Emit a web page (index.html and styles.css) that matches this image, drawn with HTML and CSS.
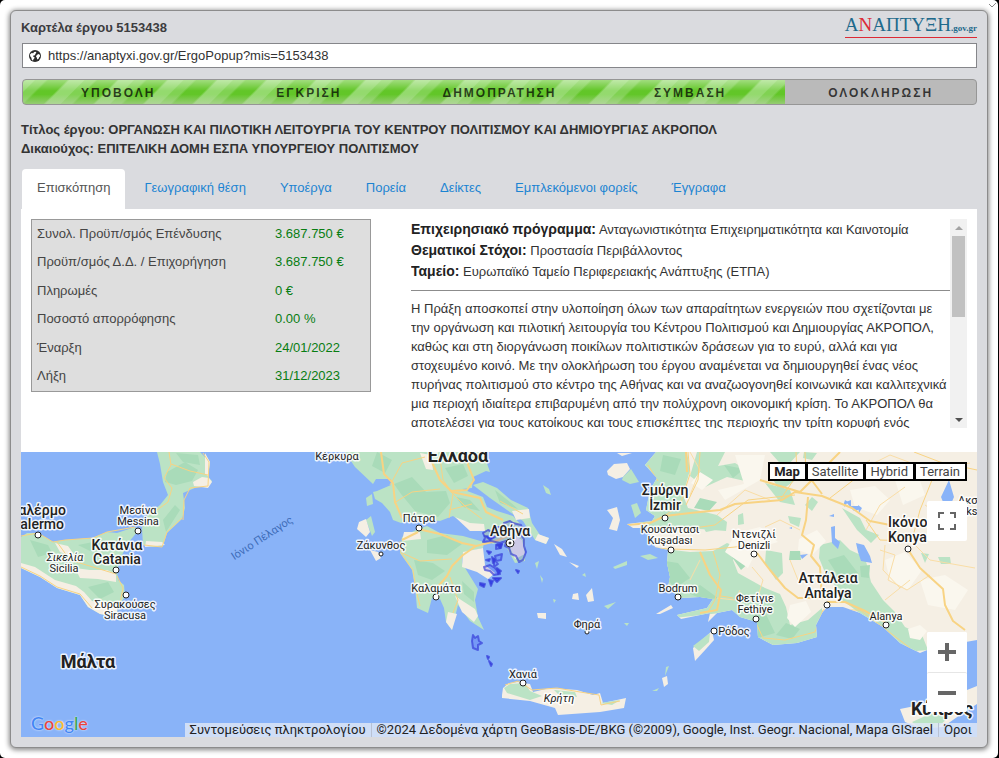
FILE: index.html
```html
<!DOCTYPE html>
<html lang="el">
<head>
<meta charset="utf-8">
<meta name="viewport" content="width=device-width, initial-scale=1">
<title>Καρτέλα έργου 5153438</title>
<link rel="stylesheet" href="styles.css">
</head>
<body>
<svg class="corner-tick" viewBox="0 0 8 6" aria-hidden="true"><path d="M0 2l3 3 4-4" fill="none" stroke="#888"/></svg>
<main class="card">
  <header class="card-head">
    <h1 class="card-title"><label for="url">Καρτέλα έργου 5153438</label></h1>
    <a class="brand" href="#">Α<span class="brand-red">Ν</span>ΑΠΤΥΞΗ<small>.gov.gr</small></a>
  </header>

  <div class="url-box">
    <svg class="globe" viewBox="0 0 12 12" aria-hidden="true">
      <circle cx="6" cy="6" r="6" fill="#2c2c2c"/>
      <path fill="#fff" d="M1 4.6 2.6 3l1.6.3.9-1.2 1.5-.4.8 1-1.1 1.2-.3 1.3-1.5.2-.6 1 1.4.5.2 1.2-1.2 1.4-.3 1.2-1.3-1.2-.3-1.7L1.200 6.300z"/>
      <path fill="#fff" d="M7.600 5.200 9.300 4.100l1.500.6.4 1.600-1 .9-.6 1.600-1.400.7-.3-1.700-.9-1z"/>
    </svg>
    <input id="url" class="url-input" type="text" readonly value="https://anaptyxi.gov.gr/ErgoPopup?mis=5153438">
  </div>

  <ol class="progress">
    <li class="step">ΥΠΟΒΟΛΗ</li>
    <li class="step">ΕΓΚΡΙΣΗ</li>
    <li class="step">ΔΗΜΟΠΡΑΤΗΣΗ</li>
    <li class="step">ΣΥΜΒΑΣΗ</li>
    <li class="step">ΟΛΟΚΛΗΡΩΣΗ</li>
  </ol>

  <div class="project">
    <p>Τίτλος έργου: ΟΡΓΑΝΩΣΗ ΚΑΙ ΠΙΛΟΤΙΚΗ ΛΕΙΤΟΥΡΓΙΑ ΤΟΥ ΚΕΝΤΡΟΥ ΠΟΛΙΤΙΣΜΟΥ ΚΑΙ ΔΗΜΙΟΥΡΓΙΑΣ ΑΚΡΟΠΟΛ</p>
    <p>Δικαιούχος: ΕΠΙΤΕΛΙΚΗ ΔΟΜΗ ΕΣΠΑ ΥΠΟΥΡΓΕΙΟΥ ΠΟΛΙΤΙΣΜΟΥ</p>
  </div>

  <nav class="tabs">
    <a class="tab active" href="#">Επισκόπηση</a>
    <a class="tab" href="#">Γεωγραφική θέση</a>
    <a class="tab" href="#">Υποέργα</a>
    <a class="tab" href="#">Πορεία</a>
    <a class="tab" href="#">Δείκτες</a>
    <a class="tab" href="#">Εμπλεκόμενοι φορείς</a>
    <a class="tab" href="#">Έγγραφα</a>
  </nav>

  <section class="overview">
    <div class="facts-wrap">
      <table class="facts">
        <tr><th scope="row">Συνολ. Προϋπ/σμός Επένδυσης</th><td>3.687.750 €</td></tr>
        <tr><th scope="row">Προϋπ/σμός Δ.Δ. / Επιχορήγηση</th><td>3.687.750 €</td></tr>
        <tr><th scope="row">Πληρωμές</th><td>0 €</td></tr>
        <tr><th scope="row">Ποσοστό απορρόφησης</th><td>0.00 %</td></tr>
        <tr><th scope="row">Έναρξη</th><td>24/01/2022</td></tr>
        <tr><th scope="row">Λήξη</th><td>31/12/2023</td></tr>
      </table>
    </div>
    <div class="details">
      <div class="details-text">
        <p class="meta"><strong>Επιχειρησιακό πρόγραμμα:</strong> Ανταγωνιστικότητα Επιχειρηματικότητα και Καινοτομία</p>
        <p class="meta"><strong>Θεματικοί Στόχοι:</strong> Προστασία Περιβάλλοντος</p>
        <p class="meta"><strong>Ταμείο:</strong> Ευρωπαϊκό Ταμείο Περιφερειακής Ανάπτυξης (ΕΤΠΑ)</p>
        <p class="summary">Η Πράξη αποσκοπεί στην υλοποίηση όλων των απαραίτητων ενεργειών που σχετίζονται με την οργάνωση και πιλοτική λειτουργία του Κέντρου Πολιτισμού και Δημιουργίας ΑΚΡΟΠΟΛ, καθώς και στη διοργάνωση ποικίλων πολιτιστικών δράσεων για το ευρύ, αλλά και για στοχευμένο κοινό. Με την ολοκλήρωση του έργου αναμένεται να δημιουργηθεί ένας νέος πυρήνας πολιτισμού στο κέντρο της Αθήνας και να αναζωογονηθεί κοινωνικά και καλλιτεχνικά μια περιοχή ιδιαίτερα επιβαρυμένη από την πολύχρονη οικονομική κρίση. Το ΑΚΡΟΠΟΛ θα αποτελέσει για τους κατοίκους και τους επισκέπτες της περιοχής την τρίτη κορυφή ενός</p>
      </div>
      <div class="scrollbar" aria-hidden="true">
        <span class="arrow up"></span>
        <span class="thumb"></span>
        <span class="arrow down"></span>
      </div>
    </div>
  </section>

  <section class="map">
    <svg class="map-canvas" viewBox="21 452 956 285" preserveAspectRatio="xMidYMid slice" role="img" aria-label="Χάρτης">
      <defs>
        <clipPath id="turkey"><path d="M656 452 645 465 657 478 650 490 646 510 655 516 652 521 627 524 633 528 647 528 655 547 668 550 667 563 670 577 668 587 680 598 700 597 713 599 707 608 677 615 681 619 710 613 708 622 717 613 732 610 740 617 757 622 758 637 773 645 797 643 817 637 816 625 822 613 827 607 843 607 860 613 883 627 900 643 920 653 932 648 977 640V452z"/></clipPath>
      </defs>
      <rect class="sea" x="21" y="452" width="956" height="285"/>

      <g class="land">
        <path class="green" d="M157 452 160 464 163 482 168 495 160 505 147 515 142 528 143 545 153 547 163 546 167 533 182 519 185 508 183 493 197 487 208 487 212 481 208 477 210 462 200 452z"/>
        <path class="beige" d="M194 486 193 482 202 477 209 478 212 482 208 488zM146 541 162 542 165 545 145 547zM205 453 210 462 208 476 205 474z"/>
        <path class="wood" d="M167 472 185 462 198 470 192 481 176 485 165 482zM163 520 175 505 180 510 166 532zM176 453 198 455 200 465 183 462z"/>
        <path class="green" d="M21 537 27 533 38 533 53 542 65 540 93 538 107 532 117 533 135 527 138 531 128 543 122 555 117 570 118 580 124 585 125 597 118 606 117 617 100 614 88 607 80 595 57 588 40 577 21 568z"/>
        <path class="beige" d="M21 563 35 567 55 580 76 586 84 592 92 601 117 605 117 617 100 614 88 607 80 595 57 588 40 577 21 568zM75 568 90 570 107 570 116 574 116 582 98 579 80 578zM55 543 68 546 78 560 60 552z"/>
        <path class="wood" d="M30 540 48 545 52 553 38 557zM78 545 98 541 105 546 90 551zM88 587 108 582 114 592 100 599z"/>
      </g>
      <g class="road">
        <path d="M169 452 171 465 164 478 172 488 168 502 150 515M183 520 184 500 190 488 208 486 209 462 203 453M171 464 190 471 208 475M21 536 38 533 53 542 65 540 93 538 107 532 135 527M57 542 70 560 116 574M21 567 40 576 57 587 80 594 92 608M117 576 123 588 120 603M144 545 162 547 167 532 182 518"/>
      </g>

      <g class="land">
        <path class="green" d="M345 452 355 467 373 484 376 479 391 479 391 485 377 491 373 492 375 499 382 503 390 512 393 520 401 523 417 519 440 521 453 516 462 522 470 529 484 528 484 538 493 544 503 541 515 563 525 561 525 540 523 527 513 516 497 511 487 507 483 497 462 489 472 488 473 477 486 471 490 472 483 452z"/>
        <path class="green" d="M402 537 418 529 427 526 440 533 463 536 484 542 483 548 463 553 462 563 478 589 475 600 478 617 484 630 470 621 458 605 456 613 452 630 446 622 444 608 440 599 432 598 428 613 417 608 415 587 412 570 400 553z"/>
        <path class="green" d="M473 485 483 482 497 488 511 500 528 508 532 523 540 535 549 538 546 544 535 540 523 521 507 510 490 498z"/>
        <path class="beige" d="M463 552 483 548 485 565 495 573 488 579 477 572 462 567zM404 532 420 532 421 539 402 541zM455 596 475 609 478 616 474 622 462 612zM448 612 457 614 452 630 446 622zM455 517 470 523 484 524 485 531 470 531zM512 511 529 509 530 518 516 520zM512 534 522 540 525 554 515 559 509 545zM538 534 549 538 546 544 535 540zM420 453 431 455 433 470 426 469z"/>
        <path class="wood" d="M394 484 412 477 426 492 446 491 450 503 438 517 415 511 401 494zM377 452 392 460 385 473 372 466zM445 468 463 464 468 476 454 483zM456 497 470 500 480 511 463 507zM427 540 447 535 462 544 447 555 427 553zM414 560 433 563 445 571 432 580 418 575zM462 581 474 592 474 602 464 594zM495 490 510 502 518 509 500 503z"/>
        <path class="green" d="M366 498 372 494 373 504 367 506zM366 520 371 516 375 532 372 536z"/>
        <path class="beige" d="M357 529 359 522 366 519 370 532 366 537zM370 550 378 552 381 558 376 561z"/>
        <path class="beige" d="M502 695 503 688 509 683 518 682 530 684 533 692 550 688 577 690 593 695 600 693 603 703 626 698 624 708 600 712 558 715 555 708 530 701 502 698z"/>
        <path class="green" d="M504 688 510 684 525 683 530 691 542 696 530 700 507 693zM554 690 575 692 577 697 558 694zM600 703 620 700 612 705z"/>
      </g>
      <g class="road thick">
        <path d="M381 452 384 474 393 483 395 502 402 518M418 529 440 534 462 543 476 546 496 541 510 535M476 546 463 555 452 566 447 576 436 589M431 460 440 480 452 492 480 498 486 512 503 520M466 452 468 465 474 480 467 490 451 491M402 540 418 532"/>
      </g>
      <g class="road">
        <path d="M390 485 402 463 425 457M394 503 412 492 440 489M440 458 443 480 453 494 449 518M453 494 466 507 482 519M449 510 472 504M402 553 420 561 452 559M400 541 401 553 413 570 416 590 420 606M450 577 458 600 453 613M505 685 518 681 532 690 557 688 580 692 599 695 601 705 620 701M500 501 523 514"/>
      </g>
      <g class="land">
        <path class="beige" d="M607 471 614 464 627 463 630 469 623 477 616 479 608 475zM607 510 617 507 620 520 617 531 609 529 613 518zM617 453 632 453 622 456zM554 544 562 549 567 557 560 555zM569 562 579 566 577 568zM573 594 578 593 579 600 572 599zM586 595 592 588 594 601 588 602zM537 613 546 613 546 619 538 618zM656 614 671 605 673 608 660 614zM662 678 667 676 668 684 664 687z"/>
        <path class="green" d="M623 477 631 469 639 482 630 484 622 480zM631 505 637 503 641 513 635 518zM640 556 650 554 658 558 648 560zM613 567 627 561 627 565 615 569zM604 606 616 602 608 609zM543 485 549 489 551 495 546 493zM535 563 539 561 537 569zM540 575 543 579 542 583zM666 667 669 666 665 676zM652 691 659 688 657 691zM582 575 585 573 586 577zM624 623 629 623 627 626zM553 599 556 600 554 603z"/>
        <path class="beige" d="M693 648 712 631 714 640 706 649 695 661z"/>
        <path class="green" d="M693 646 710 633 709 642 699 651z"/>
      </g>

      <g clip-path="url(#turkey)">
        <rect class="beige" x="620" y="452" width="360" height="210"/>
        <path class="green" d="M640 452H687L690 470 683 495 688 508 717 515 727 522 726 531 700 529 680 527 640 532V505zM697 452 725 452 718 466 735 463 750 472 745 481 727 477 705 487 690 476zM655 548 690 552 713 551 727 543 739 548 733 560 738 573 765 588 780 594 786 607 790 625 808 620 822 608 822 650 740 650 730 612 655 620zM738 515 743 513 744 524 738 525zM695 515 712 518 721 529 706 532zM766 550 782 553 783 573 776 580 765 563zM820 545 840 540 850 550 865 557 871 582 883 600 895 612 905 627 922 635 928 650 905 652 880 630 858 612 842 600 833 582 826 575 819 558zM765 483 790 490 795 505 780 502zM788 516 801 518 799 527 790 523zM842 508 860 518 866 530 879 535 871 543 857 530zM770 452 800 452 787 466 797 479 780 491 772 478 786 470zM804 452 817 453 812 460 803 458zM921 553 929 554 925 563zM938 557 950 557 951 564 941 564zM812 497 818 502 812 511 805 505z"/>
        <path class="wood" d="M700 498 717 502 709 511 694 508zM658 560 678 563 690 578 675 588 667 579zM686 592 700 585 718 598 704 600zM663 455 681 459 675 475 660 471zM724 465 744 469 733 478zM790 551 800 551 801 560 789 560zM828 560 844 555 858 573 844 585zM860 566 870 565 869 578 861 577zM747 622 765 612 775 633 758 638zM786 623 800 629 792 639 776 635zM732 557 750 562 741 570z"/>
        <path class="light" d="M735 455 765 455 760 480 725 500 718 490 744 484zM850 490 875 486 890 500 877 515 855 507zM736 533 760 527 778 542 758 548 748 568 725 552zM790 605 806 601 811 612 795 627 787 618zM895 480 918 475 925 495 903 505zM885 560 905 552 922 570 908 590 890 580zM700 472 713 480 702 490 691 483zM920 580 945 575 968 590 955 610 928 605zM908 629 920 625 927 631 920 640 910 638zM799 539 817 530 826 541 812 555 798 550z"/>
        <path class="sea" d="M941 497 949 480 954 497 951 504 943 502zM844 503 845 500 848 502 844 507zM846 502 851 500 851 506 858 506 861 509 854 511zM831 527 835 526 835 538 840 542 838 549 832 543zM856 543 864 545 870 556 872 563 861 561 858 552zM800 555 808 554 802 559zM858 505 862 508 859 513zM829 516 834 514 834 517zM789 528 792 527 792 529z"/>
        <g class="road faint">
          <path d="M690 452 700 470 690 495M717 515 745 490 770 500M765 527 780 520 800 530M860 470 890 455 930 470 970 463M866 530 880 505 905 487M880 550 895 555 888 580 907 590 930 575M913 543 930 560 975 568M885 600 910 580M752 567 763 580 757 600M820 480 850 475 870 460M700 560 690 580M717 598 735 600 740 590M925 505 940 515 945 530M790 560 798 580M885 545 883 570 900 588"/>
        </g>
        <g class="road">
          <path d="M648 465 658 481M688 452 690 474 680 505 663 517M700 452 698 480 686 505M796 452 797 475 780 500M805 452 806 472M797 465 830 475 860 465M680 530 715 525 748 500 795 495M860 475 830 498M914 452 940 462 977 470M866 520 880 540 910 541M932 480 920 510 912 540M655 548 670 549 705 550 735 547 750 545M713 551 720 575 715 600 708 612M733 598 721 596M757 625 763 638 785 640 815 632 823 610 860 610 880 625 910 648"/>
        </g>
        <g class="road thick">
          <path d="M627 525 650 523 665 516 690 513 720 510 735 504 782 500 795 492 822 496 852 508 870 521 890 525M700 552 710 575 721 590 717 610 700 613M757 553 770 570 785 588 798 598 823 598M760 480 800 492 840 452M808 497 806 520 802 535 814 545 811 556 820 567 822 598M827 602 845 602 865 611 885 622M907 548 920 568 943 589 945 605 953 621 965 630M686 452 687 472M810 478 822 494"/>
        </g>
      </g>
      <g class="land">
        <path class="beige" d="M900 709 910 707 925 703 967 690 977 686V704L960 715 943 727 920 728 905 722z"/>
        <path class="green" d="M912 722 930 714 950 716 938 727 920 728z"/>
      </g>

      <g class="region">
        <path d="M483 533 488 530 492 532 497 527 503 527 504 523 510 521 513 523 521 525 523 530 520 534 524 539 524 546 526 552 523 560 519 562 516 556 511 554 509 548 505 546 506 541 500 543 491 541 483 542 485 538zM496 545 502 543 501 548 496 549zM495 556 502 554 501 560 496 561zM484 567 490 565 495 568 500 574 494 575 490 571 485 570zM494 559 498 564 494 567zM473 635 475 638 478 636 479 641 482 643 478 645 478 650 473 648 472 641z"/>
        <path class="solid" d="M497 545 502 544 500 548zM487 551 491 552 489 554zM492 557 495 560 493 563zM497 568 501 571 498 574zM493 578 501 578 497 582zM480 583 485 584 484 587 480 585zM489 580 493 581 491 586zM516 570 519 571 518 573zM487 656 489 657 488 659zM489 661 492 664 491 666zM485 536 495 537 490 540zM486 560 490 559 489 561z"/>
      </g>

      <g class="pins">
        <circle cx="38" cy="535" r="3"/><circle cx="138" cy="531" r="3"/><circle cx="116" cy="570" r="3"/><circle cx="126" cy="595" r="3"/>
        <circle cx="419" cy="528" r="3"/><circle cx="381" cy="554" r="2"/><circle cx="436" cy="597" r="3"/><circle cx="523" cy="683" r="3"/><circle cx="587" cy="632" r="2"/>
        <circle cx="665" cy="518" r="3"/><circle cx="671" cy="550" r="3"/><circle cx="754" cy="554" r="3"/><circle cx="678" cy="597" r="3"/><circle cx="756" cy="619" r="3"/><circle cx="714" cy="631" r="3"/>
        <circle cx="827" cy="605" r="3"/><circle cx="886" cy="625" r="3"/><circle cx="908" cy="549" r="3"/>
        <circle cx="510" cy="543" r="4"/><circle class="dot" cx="510" cy="543" r="1"/>
      </g>

      <g class="labels">
        <g class="small">
          <text x="138" y="514">Μεσίνα</text><text x="138" y="525">Messina</text>
          <text x="65" y="561" class="italic">Σικελία</text><text x="64" y="572">Sicilia</text>
          <text x="125" y="608">Συρακούσες</text><text x="125" y="619">Siracusa</text>
          <text x="337" y="460">Κέρκυρα</text>
          <text x="419" y="522">Πάτρα</text><text x="381" y="549">Ζάκυνθος</text><text x="436" y="592">Καλαμάτα</text>
          <text x="587" y="628">Φηρά</text><text x="523" y="678">Χανιά</text><text x="559" y="702" class="italic">Κρήτη</text>
          <text x="670" y="533">Κουσάντασι</text><text x="670" y="544">Kuşadası</text>
          <text x="754" y="538">Ντενιζλί</text><text x="754" y="549">Denizli</text>
          <text x="678" y="592">Bodrum</text>
          <text x="755" y="602">Φετίγιε</text><text x="755" y="613">Fethiye</text>
          <text x="734" y="635">Ρόδος</text><text x="886" y="620">Alanya</text>
          <text x="958" y="504" class="start">Ακσαράι</text><text x="959" y="515" class="start">Aksaray</text>
        </g>
        <g class="city">
          <text x="66" y="515" class="end">Παλέρμο</text><text x="64" y="529" class="end">Palermo</text>
          <text x="117" y="550">Κατάνια</text><text x="117" y="564">Catania</text>
          <text x="510" y="536">Αθήνα</text>
          <text x="665" y="495">Σμύρνη</text><text x="665" y="510">İzmir</text>
          <text x="828" y="583">Αττάλεια</text><text x="828" y="598">Antalya</text>
          <text x="888" y="527" class="start">Ικόνιο</text><text x="888" y="542" class="start">Konya</text>
        </g>
        <g class="country">
          <text x="88" y="668">Μάλτα</text><text x="458" y="462">Ελλάδα</text><text x="942" y="715">Κύπρος</text>
        </g>
        <text class="water" transform="translate(264 541) rotate(-33)">Ιόνιο Πέλαγος</text>
      </g>
    </svg>

    <div class="map-types">
      <button class="map-type selected" type="button">Map</button>
      <button class="map-type" type="button">Satellite</button>
      <button class="map-type" type="button">Hybrid</button>
      <button class="map-type" type="button">Terrain</button>
    </div>

    <button class="map-button fullscreen" type="button" aria-label="Πλήρης οθόνη">
      <svg viewBox="0 0 18 18" width="18" height="18"><path d="M1 6V1h5M12 1h5v5M17 12v5h-5M6 17H1v-5" fill="none" stroke="#666" stroke-width="2"/></svg>
    </button>

    <div class="zoom">
      <button class="map-button" type="button" aria-label="Μεγέθυνση">
        <svg viewBox="0 0 18 18" width="18" height="18"><path d="M9 0v18M0 9h18" stroke="#666" stroke-width="4"/></svg>
      </button>
      <button class="map-button" type="button" aria-label="Σμίκρυνση">
        <svg viewBox="0 0 18 18" width="18" height="18"><path d="M0 9h18" stroke="#666" stroke-width="4"/></svg>
      </button>
    </div>

    <a class="google" href="#" aria-label="Google"><span class="b">G</span><span class="r">o</span><span class="y">o</span><span class="b">g</span><span class="g">l</span><span class="r">e</span></a>

    <div class="credits">
      <button class="credit" type="button">Συντομεύσεις πληκτρολογίου</button>
      <span class="credit">©2024 Δεδομένα χάρτη GeoBasis-DE/BKG (©2009), Google, Inst. Geogr. Nacional, Mapa GISrael</span>
      <a class="credit" href="#">Όροι</a>
    </div>
  </section>
</main>
</body>
</html>
```
FILE: styles.css
```css
* {
  box-sizing: border-box;
}

html {
  background: #000;
}

body {
  position: relative;
  margin: 0 1px 0 0;
  min-height: 100vh;
  padding: 10px;
  border-radius: 5px;
  background: #fff;
  color: #333;
  font: 13px/19px "Liberation Sans", Arial, sans-serif;
}

p,
h1,
ol {
  margin: 0;
  padding: 0;
}

a {
  text-decoration: none;
}

button {
  margin: 0;
  font: inherit;
  cursor: pointer;
}

.corner-tick {
  position: absolute;
  top: 2px;
  right: 1px;
  width: 8px;
  height: 6px;
}

.card {
  padding: 0 10px 10px;
  border: 1px solid #8c8c8c;
  border-radius: 6px;
  background: #dadbdf;
  box-shadow: 0 1px 5px 1px #888;
}

.card-head {
  display: flex;
  align-items: center;
  justify-content: space-between;
  height: 32px;
}

.card-title {
  color: #3c3c40;
  font-size: 13px;
}

.brand {
  border-bottom: 1px solid #dc2a35;
  color: #1f6a8c;
  font: 19px/18px "Liberation Serif", "Times New Roman", serif;
}

.brand small {
  font-size: 9px;
  font-weight: bold;
}

.brand-red {
  color: #dc2a35;
}

.url-box {
  display: flex;
  align-items: center;
  gap: 7px;
  height: 25px;
  margin: 0 0 0 1px;
  padding: 0 6px;
  border: 1px solid #85868a;
  background: #fff;
}

.globe {
  width: 12px;
  height: 12px;
}

.url-input {
  flex: 1;
  padding: 0;
  border: 0;
  outline: 0;
  background: none;
  color: #333;
  font: inherit;
}

.progress {
  display: flex;
  height: 26px;
  margin: 11px 0 0 1px;
  overflow: hidden;
  border: 1px solid #969696;
  border-radius: 4px;
  background:
    linear-gradient(to bottom, rgba(255, 255, 255, 0.4) 0, rgba(255, 255, 255, 0) 45%, rgba(255, 255, 255, 0) 60%, rgba(200, 210, 190, 0.5) 100%) left / 80% 100% no-repeat,
    repeating-linear-gradient(135deg, #94da6e 0 8px, #80d252 9px 16px, #62c628 18px 31px, #94da6e 33px 35px) left / 80% 100% no-repeat,
    #bababa;
  list-style: none;
}

.step {
  flex: 1;
  color: rgba(0, 0, 0, 0.72);
  font-size: 12px;
  font-weight: bold;
  line-height: 26px;
  letter-spacing: 2px;
  text-align: center;
}

.project {
  padding: 15px 0 11px;
  color: #333;
  font-weight: bold;
}

.tabs {
  display: flex;
  gap: 4px;
  padding-left: 1px;
}

.tab {
  padding: 9px 15px 12px;
  border-radius: 4px 4px 0 0;
  color: #1c84d2;
}

.tab.active {
  background: #fff;
  color: #555;
}

.overview {
  display: flex;
  gap: 40px;
  padding: 10px 10px 24px;
  background: #fff;
}

.facts-wrap {
  flex: 0 0 340px;
}

.facts {
  width: 100%;
  height: 173px;
  border: 1px solid #999;
  border-spacing: 0;
  background: #dedede;
}

.facts th,
.facts td {
  padding: 0 5px 2px;
  color: #444;
  font-weight: normal;
  text-align: left;
}

.facts td {
  width: 100px;
  color: #087d12;
}

.details {
  display: flex;
  flex: 1;
  height: 209px;
}

.details-text {
  flex: 1;
  overflow: hidden;
}

.meta {
  line-height: 21px;
}

.meta strong {
  color: #222;
  font-size: 14px;
}

.summary {
  margin-top: 8px;
  padding-top: 8px;
  border-top: 1px solid #8c8c8c;
}

.scrollbar {
  display: flex;
  flex-direction: column;
  align-items: center;
  width: 17px;
  background: #f1f1f1;
}

.thumb {
  width: 13px;
  height: 81px;
  margin: 6px 0 auto;
  background: #c1c1c1;
}

.arrow {
  border: 4px solid transparent;
}

.up {
  margin-top: 3px;
  border-bottom-color: #a3a3a3;
}

.down {
  margin-bottom: 2px;
  border-top-color: #505050;
}

.map {
  position: relative;
  height: 285px;
  overflow: hidden;
  font-family: Roboto, sans-serif;
}

.map-canvas {
  display: block;
  width: 100%;
  height: 100%;
}

.sea {
  fill: #89b3f8;
}

.green {
  fill: #bbe3c5;
}

.beige {
  fill: #f5efe4;
}

.wood {
  fill: #a9dbb9;
}

.light {
  fill: #faf7ee;
}

.road {
  fill: none;
  stroke: #f8d383;
  stroke-width: 1;
  stroke-linejoin: round;
}

.road.thick {
  stroke-width: 2;
}

.road.faint {
  stroke: #f9dda6;
}

.region {
  fill: rgba(40, 50, 240, 0.2);
  stroke: rgba(50, 55, 215, 0.65);
  stroke-width: 2;
  stroke-linejoin: round;
}

.region .solid {
  fill: #3a4cf0;
}

.pins {
  fill: #fff;
  stroke: #222;
  stroke-width: 1;
}

.pins .dot {
  fill: #222;
}

.labels text {
  fill: #222;
  paint-order: stroke;
  stroke: rgba(255, 255, 255, 0.85);
  stroke-width: 3;
  stroke-linejoin: round;
  text-anchor: middle;
}

.small text {
  font-size: 11px;
}

.city text {
  font-size: 14px;
  font-weight: 500;
}

.country text {
  font-size: 18px;
  font-weight: 700;
}

.labels .italic {
  font-style: italic;
}

.labels .start {
  text-anchor: start;
}

.labels .end {
  text-anchor: end;
}

.labels .water {
  fill: #3d6cb8;
  stroke: none;
  font-size: 11px;
}

.map-types {
  position: absolute;
  top: 10px;
  right: 10px;
  display: flex;
}

.map-type {
  height: 19px;
  padding: 0 5px 0 4px;
  border: 2px solid #000;
  background: #fff;
  color: #444;
  font-size: 13px;
  line-height: 15px;
}

.map-type + .map-type {
  margin-left: -1px;
}

.map-type.selected {
  color: #222;
  font-weight: 700;
}

.map-button {
  display: flex;
  align-items: center;
  justify-content: center;
  width: 40px;
  height: 40px;
  padding: 0;
  border: 0;
  border-radius: 2px;
  background: #fff;
}

.fullscreen {
  position: absolute;
  top: 49px;
  right: 10px;
}

.zoom {
  position: absolute;
  right: 10px;
  bottom: 25px;
  border-radius: 2px;
  background: #fff;
}

.zoom .map-button + .map-button {
  border-top: 1px solid #e6e6e6;
}

.google {
  position: absolute;
  bottom: 2px;
  left: 10px;
  font: 500 18px/24px Lato, sans-serif;
  text-shadow: 0 0 2px #fff;
}

.b {
  color: #4285f4;
}

.r {
  color: #e8453c;
}

.y {
  color: #f9bb2d;
}

.g {
  color: #34a853;
}

.credits {
  position: absolute;
  right: 0;
  bottom: 0;
  display: flex;
  height: 14px;
  background: rgba(225, 232, 246, 0.8);
  font-size: 13px;
  line-height: 14px;
  white-space: nowrap;
}

.credit {
  padding: 0 5px;
  border: 0;
  background: none;
  color: #222;
}

.credit + .credit {
  border-left: 1px solid #b9c2d4;
}
```
